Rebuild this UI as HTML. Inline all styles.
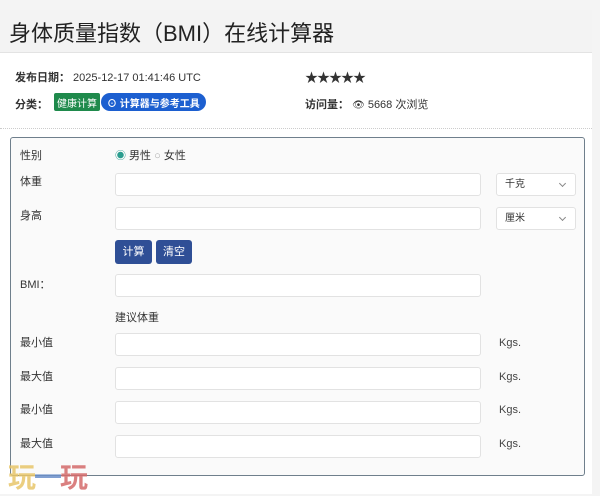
<!DOCTYPE html>
<html><head><meta charset="utf-8"><style>
*{box-sizing:border-box;margin:0;padding:0}
body{width:600px;height:494px;background:#f4f4f4;font-family:"Liberation Sans","Noto Sans CJK SC",sans-serif;color:#333;position:relative;overflow:hidden}
.card{position:absolute;left:0;top:10px;width:592px;height:484px;background:#fff}
.head{position:absolute;left:0;top:0;width:592px;height:43px;background:#f3f3f3;border-bottom:1px solid #e3e3e3}
.head h1{position:absolute;left:9px;top:6px;font-size:22px;font-weight:normal;color:#222}
.t{position:absolute;font-size:11px;white-space:nowrap}
.dot{position:absolute;left:0;top:118px;width:592px;border-top:1px dotted #ccc}
.box{position:absolute;left:10px;top:127px;width:575px;height:339px;background:#fafafa;border:1px solid #6f7f8c;border-radius:3px}
.in{position:absolute;left:104px;width:366px;height:23px;background:#fff;border:1px solid #e2e2e2;border-radius:3px}
.sel{position:absolute;left:485px;width:80px;height:23px;background:#fff;border:1px solid #e2e2e2;border-radius:3px;font-size:10px;line-height:21px;padding-left:8px}
.sel:after{content:"";position:absolute;right:10px;top:7px;width:4px;height:4px;border-right:1px solid #888;border-bottom:1px solid #888;transform:rotate(45deg)}
.btn{position:absolute;top:102px;height:24px;background:#2f4f96;color:#fff;border-radius:3px;font-size:11px;text-align:center;line-height:24px}
.l{position:absolute;left:9px;font-size:11px;color:#333}
.k{position:absolute;left:488px;font-size:11px;color:#444}
</style></head><body>
<div class="card">
<div class="head"><h1>身体质量指数（BMI）在线计算器</h1></div>
<div class="t" style="left:15px;top:59px"><b>发布日期：</b> 2025-12-17 01:41:46 UTC</div>
<div class="t" style="left:305px;top:57px;font-size:13px;letter-spacing:-1px">★★★★★</div>
<div class="t" style="left:15px;top:86px"><b>分类：</b></div>
<div class="t" style="left:54px;top:83px;background:#1f8a4c;color:#fff;padding:2px 3px;font-size:10px;border-radius:2px;height:18px">健康计算</div>
<div class="t" style="left:101px;top:83px;background:#1c5fd0;color:#fff;padding:2px 6px;font-size:10px;border-radius:9px;height:18px;font-weight:bold">⊙ 计算器与参考工具</div>
<div class="t" style="left:305px;top:86px"><b>访问量：</b> <span style="font-size:10px">👁</span> 5668 次浏览</div>
<div class="dot"></div>
<div class="box">
<div class="l" style="top:9px">性别</div>
<div class="t" style="left:104px;top:9px"><span style="color:#2a9d8f">◉</span> 男性 <span style="color:#aaa">○</span> 女性</div>
<div class="l" style="top:35px">体重</div><div class="in" style="top:35px"></div><div class="sel" style="top:35px">千克</div>
<div class="l" style="top:69px">身高</div><div class="in" style="top:69px"></div><div class="sel" style="top:69px">厘米</div>
<div class="btn" style="left:104px;width:37px">计算</div><div class="btn" style="left:145px;width:36px">清空</div>
<div class="l" style="top:138px">BMI：</div><div class="in" style="top:136px"></div>
<div class="t" style="left:104px;top:171px">建议体重</div>
<div class="l" style="top:196px">最小值</div><div class="in" style="top:195px"></div><div class="k" style="top:199px">Kgs.</div>
<div class="l" style="top:230px">最大值</div><div class="in" style="top:229px"></div><div class="k" style="top:233px">Kgs.</div>
<div class="l" style="top:263px">最小值</div><div class="in" style="top:263px"></div><div class="k" style="top:266px">Kgs.</div>
<div class="l" style="top:297px">最大值</div><div class="in" style="top:297px"></div><div class="k" style="top:300px">Kgs.</div>
</div>
<div class="t" style="left:8px;top:446px;font-size:28px;font-weight:bold;color:#e8c66a;opacity:.85;letter-spacing:-2px">玩<span style="color:#6a8fc9">一</span><span style="color:#d46a6a">玩</span></div>
</div>
</body></html>
